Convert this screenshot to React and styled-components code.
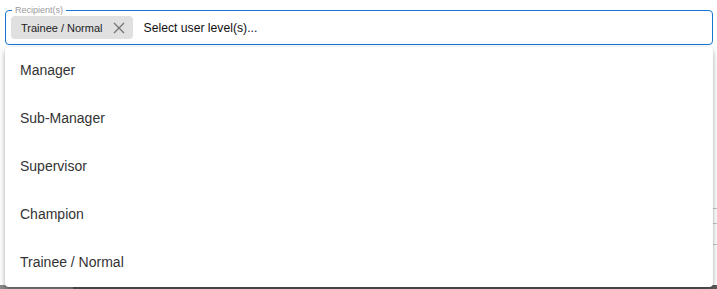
import React from 'react';
import styled, { createGlobalStyle } from 'styled-components';

const GlobalStyle = createGlobalStyle`
  html, body {
    margin: 0;
    padding: 0;
    background: #ffffff;
    font-family: "Liberation Sans", Arial, sans-serif;
  }
`;

const Page = styled.div`
  position: relative;
  width: 717px;
  height: 289px;
  overflow: hidden;
  display: flex;
  flex-direction: column;
`;

const Field = styled.div`
  position: relative;
  margin: 10px 4px 0 5px;
  height: 35px;
  box-sizing: border-box;
  border: 1px solid #1976d2;
  border-radius: 4px;
  display: flex;
  align-items: center;
  padding: 0 5px;
  gap: 11px;
  background: #fff;
`;

const Legend = styled.span`
  position: absolute;
  top: -7px;
  left: 6px;
  padding: 0 3px;
  background: #fff;
  font-size: 9px;
  line-height: 12px;
  color: #9a9a9a;
`;

const Chip = styled.div`
  display: flex;
  align-items: center;
  height: 23px;
  padding: 0 8px 0 10px;
  background: #e0e0e0;
  border-radius: 4px;
  font-size: 11px;
  color: #222;
  gap: 10px;
`;

const Placeholder = styled.span`
  font-size: 12.2px;
  color: #111;
`;

const Behind = styled.div`
  flex: 1;
  display: flex;
  flex-direction: column;
  justify-content: flex-end;
`;

const BehindRows = styled.div`
  display: flex;
  flex-direction: column;
  margin-left: auto;
  width: 10px;
  margin-bottom: 40px;
`;

const BehindRow = styled.div`
  height: ${p => p.h}px;
  border-bottom: 1px solid #c8c8c8;
  border-left: ${p => (p.dark ? '2px solid #555' : 'none')};
`;

const Footer = styled.div`
  height: 4px;
  background: linear-gradient(to right, #8a8a8a 0, #8a8a8a 73px, #5e5e5e 73px, #5e5e5e 100%);
`;

const Menu = styled.ul`
  position: absolute;
  top: 47px;
  left: 5px;
  right: 4px;
  height: 240px;
  margin: 0;
  padding: 0;
  list-style: none;
  background: #fff;
  border-radius: 4px;
  box-shadow: 0 2px 4px -1px rgba(0, 0, 0, 0.2), 0 4px 5px 0 rgba(0, 0, 0, 0.14),
    0 1px 10px 0 rgba(0, 0, 0, 0.12);
  display: flex;
  flex-direction: column;
`;

const Item = styled.li`
  height: 48px;
  box-sizing: border-box;
  padding: 0 0 2px 15px;
  display: flex;
  align-items: center;
  font-size: 14px;
  color: #333;
`;

const CloseIcon = () => (
  <svg width="12" height="12" viewBox="0 0 12 12">
    <path d="M1 1 L11 11 M11 1 L1 11" stroke="#777" strokeWidth="1.4" fill="none" />
  </svg>
);

const levels = ['Manager', 'Sub-Manager', 'Supervisor', 'Champion', 'Trainee / Normal'];

export default function App() {
  return (
    <Page>
      <GlobalStyle />
      <Field>
        <Legend>Recipient(s)</Legend>
        <Chip>
          Trainee / Normal
          <CloseIcon />
        </Chip>
        <Placeholder>Select user level(s)...</Placeholder>
      </Field>
      <Behind>
        <BehindRows>
          <BehindRow h={15} />
          <BehindRow h={14} dark />
          <BehindRow h={20} />
        </BehindRows>
        <Footer />
      </Behind>
      <Menu>
        {levels.map(l => (
          <Item key={l}>{l}</Item>
        ))}
      </Menu>
    </Page>
  );
}
